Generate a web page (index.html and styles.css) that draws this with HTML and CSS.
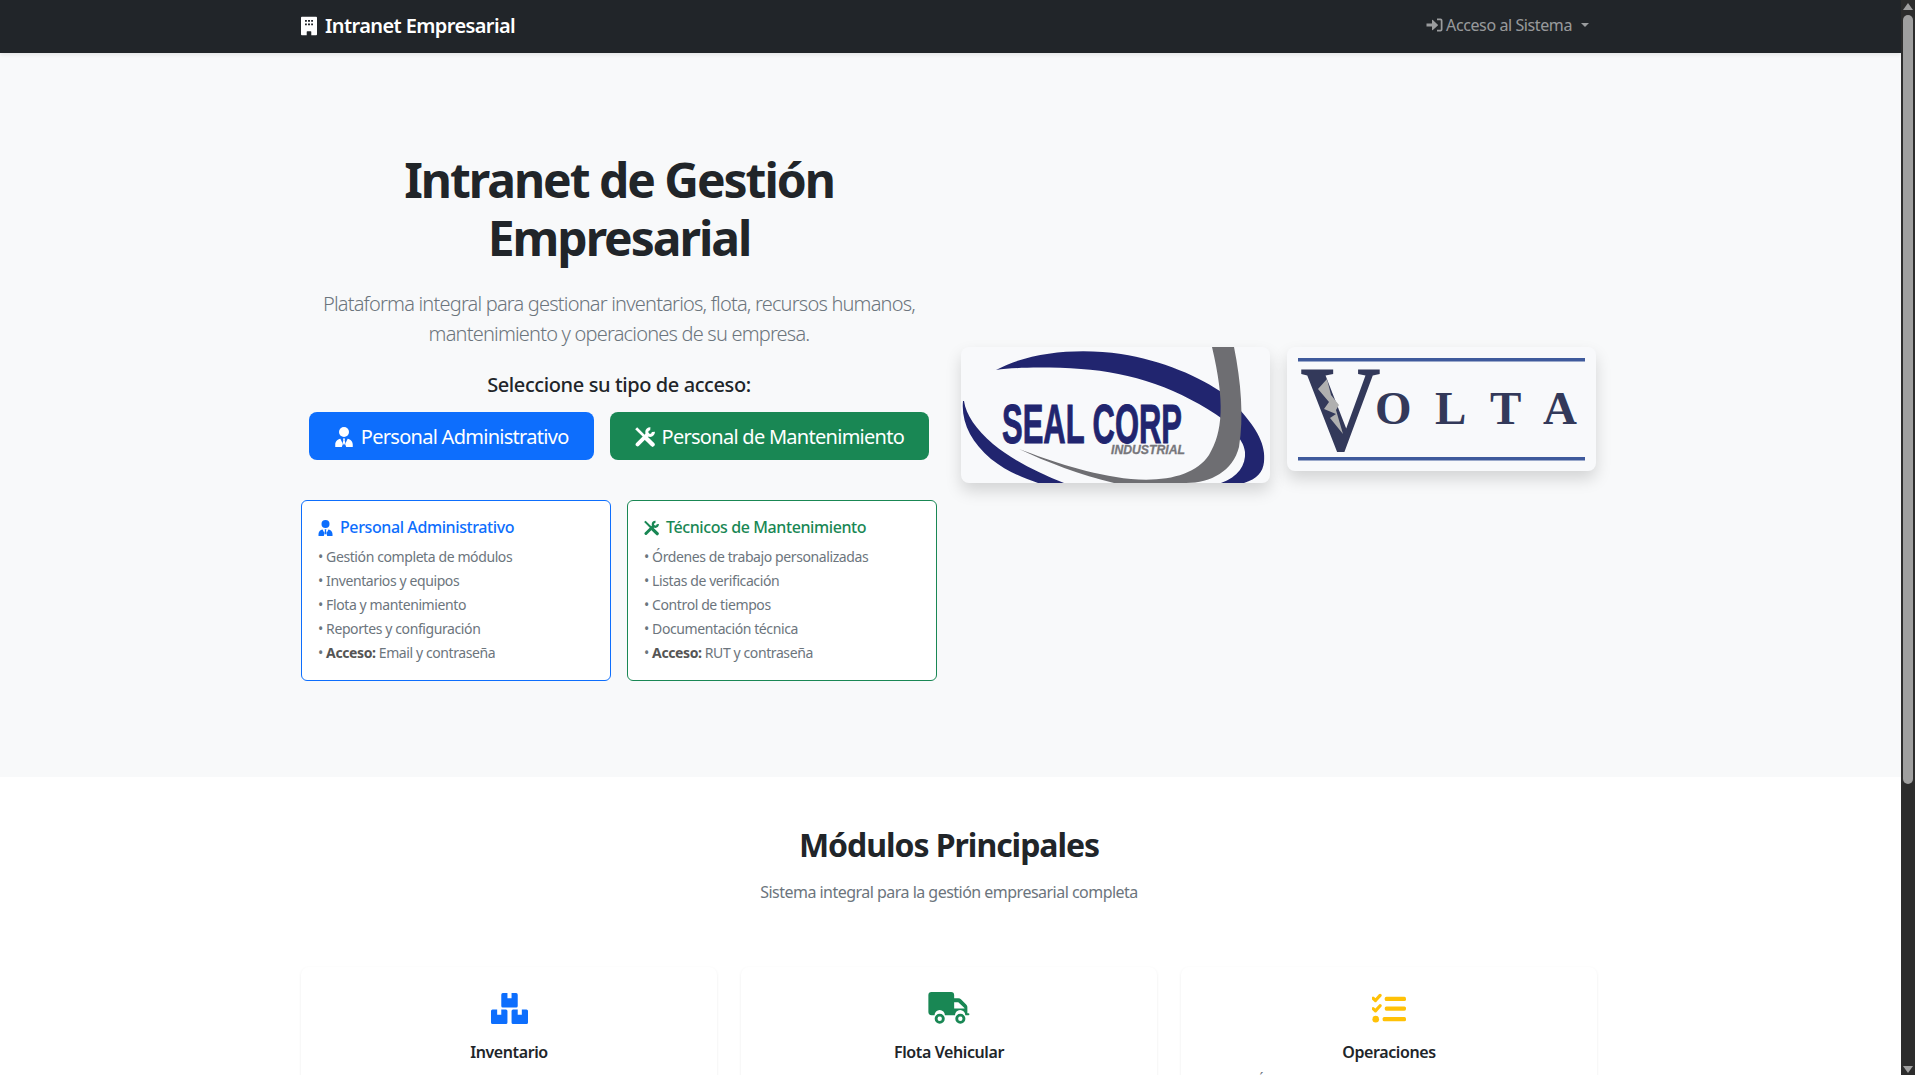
FILE: index.html
```html
<!DOCTYPE html>
<html lang="es">
<head>
	<meta charset="UTF-8">
	<meta name="viewport" content="width=device-width, initial-scale=1.0">
	<title>Intranet Empresarial</title>
	<link rel="stylesheet" href="styles.css">
</head>
<body>
	<svg class="iconDefs" aria-hidden="true">
		<symbol id="i-building" viewBox="0 0 448 512">
			<path fill-rule="evenodd" d="M24 0h400a24 24 0 0 1 24 24v464a24 24 0 0 1-24 24H288v-96a16 16 0 0 0-16-16h-96a16 16 0 0 0-16 16v96H24a24 24 0 0 1-24-24V24A24 24 0 0 1 24 0zM112 88v52h52V88zm84 0v52h56V88zm88 0v52h52V88zM112 184v52h52v-52zm84 0v52h56v-52zm88 0v52h52v-52z"/>
		</symbol>
		<symbol id="i-signin" viewBox="0 0 512 512">
			<path d="M0 208h176V104a16 16 0 0 1 27-11l160 152a16 16 0 0 1 0 23L203 419a16 16 0 0 1-27-11V304H0zM336 48h112a64 64 0 0 1 64 64v288a64 64 0 0 1-64 64H336v-56h104a16 16 0 0 0 16-16V120a16 16 0 0 0-16-16H336z"/>
		</symbol>
		<symbol id="i-user" viewBox="0 0 448 512">
			<circle cx="224" cy="128" r="128"/>
			<path d="M130 300l66 132-28 80H0v-64c0-74 56-136 130-148zM318 300c74 12 130 74 130 148v64H280l-28-80zM196 296h56l-12 44 16 60-32 70-32-70 16-60z"/>
		</symbol>
		<symbol id="i-tools" viewBox="0 0 512 512">
			<path class="iconLine iconLine-thin" d="M30 30l210 210"/>
			<path class="iconLine iconLine-thick" d="M300 300l150 150"/>
			<path class="iconLine iconLine-mid" d="M66 446l250-250"/>
			<path class="iconHead" d="M392 46a84 84 0 1 0 78 78"/>
		</symbol>
		<symbol id="i-boxes" viewBox="0 0 576 480">
			<path d="M184 0h72v80h64V0h72a24 24 0 0 1 24 24v176a24 24 0 0 1-24 24H184a24 24 0 0 1-24-24V24a24 24 0 0 1 24-24z"/>
			<path d="M24 256h72v80h64v-80h72a24 24 0 0 1 24 24v176a24 24 0 0 1-24 24H24a24 24 0 0 1-24-24V280a24 24 0 0 1 24-24z"/>
			<path d="M344 256h72v80h64v-80h72a24 24 0 0 1 24 24v176a24 24 0 0 1-24 24H344a24 24 0 0 1-24-24V280a24 24 0 0 1 24-24z"/>
		</symbol>
		<symbol id="i-truck" viewBox="0 0 640 512">
			<path fill-rule="evenodd" d="M48 0h304a48 48 0 0 1 48 48v48h64c17 0 33 7 45 19l77 77c12 12 19 28 19 45v91h16a16 16 0 0 1 0 32h-48a80 80 0 0 0-160 0H256a80 80 0 0 0-160 0H48a48 48 0 0 1-48-48V48A48 48 0 0 1 48 0zM400 160v96h160v-6l-96-90z"/>
			<circle class="iconWheel" cx="176" cy="416" r="56"/>
			<circle class="iconWheel" cx="496" cy="416" r="56"/>
		</symbol>
		<symbol id="i-tasks" viewBox="0 0 512 448">
			<path class="iconCheck" d="M16 70l36 34 70-78"/>
			<path class="iconCheck" d="M16 226l36 34 70-78"/>
			<circle cx="56" cy="384" r="50"/>
			<rect x="192" y="48" width="320" height="64" rx="24"/>
			<rect x="192" y="192" width="320" height="64" rx="24"/>
			<rect x="160" y="352" width="352" height="64" rx="24"/>
		</symbol>
	</svg>

	<div class="viewport">
		<div class="page">
			<nav class="navbar">
				<div class="container navbarInner">
					<a class="brand" href="#"><svg class="icon icon-brand"><use href="#i-building"/></svg>Intranet Empresarial</a>
					<a class="navLink" href="#"><svg class="icon icon-nav"><use href="#i-signin"/></svg>Acceso al Sistema<span class="caret"></span></a>
				</div>
			</nav>

			<section class="hero">
				<div class="container heroRow">
					<div class="heroText">
						<h1>Intranet de Gestión<br>Empresarial</h1>
						<p class="lead">Plataforma integral para gestionar inventarios, flota, recursos humanos, mantenimiento y operaciones de su empresa.</p>
						<h5>Seleccione su tipo de acceso:</h5>
						<div class="btnRow">
							<a class="btn btn-primary" href="#"><svg class="icon icon-btn"><use href="#i-user"/></svg>Personal Administrativo</a>
							<a class="btn btn-success" href="#"><svg class="icon icon-btn"><use href="#i-tools"/></svg>Personal de Mantenimiento</a>
						</div>
						<div class="accessCards">
							<div class="accessCard accessCard-primary">
								<h6><svg class="icon icon-card"><use href="#i-user"/></svg>Personal Administrativo</h6>
								<ul>
									<li>• Gestión completa de módulos</li>
									<li>• Inventarios y equipos</li>
									<li>• Flota y mantenimiento</li>
									<li>• Reportes y configuración</li>
									<li>• <strong>Acceso:</strong> Email y contraseña</li>
								</ul>
							</div>
							<div class="accessCard accessCard-success">
								<h6><svg class="icon icon-card"><use href="#i-tools"/></svg>Técnicos de Mantenimiento</h6>
								<ul>
									<li>• Órdenes de trabajo personalizadas</li>
									<li>• Listas de verificación</li>
									<li>• Control de tiempos</li>
									<li>• Documentación técnica</li>
									<li>• <strong>Acceso:</strong> RUT y contraseña</li>
								</ul>
							</div>
						</div>
					</div>

					<div class="heroLogos">
						<div class="logoCard">
							<svg class="logo logo-seal" viewBox="0 0 309 136" role="img" aria-label="Seal Corp Industrial">
								<path class="sealNavy" d="M35 23C70 4 120 1 160 7C200 13 240 30 263 47V73C220 42 170 25 120 22C90 20 55 20 35 23z"/>
								<path class="sealNavy" d="M279 63C296 82 305 98 303 115C302 125 296 132 283 136H260C277 130 285 118 284 105C283 97 279 92 275 87z"/>
								<path class="sealNavy" d="M2 54C0 75 10 95 30 112C45 124 62 131 77 136H103C75 125 50 112 32 97C15 82 5 68 3 54z"/>
								<path class="sealGrey" d="M251 0H273C280 35 283 70 278 100C272 124 250 136 225 136H153C120 128 85 115 58 102C90 114 130 128 170 132C205 135 235 128 248 108C262 85 264 55 251 0z"/>
								<text class="sealName" x="41" y="96" textLength="180" lengthAdjust="spacingAndGlyphs">SEAL CORP</text>
								<text class="sealSub" x="150" y="107" textLength="74" lengthAdjust="spacingAndGlyphs">INDUSTRIAL</text>
							</svg>
						</div>
						<div class="logoCard">
							<svg class="logo logo-volta" viewBox="0 0 309 124" role="img" aria-label="Volta">
								<rect class="voltaRule" x="11" y="11" width="287" height="3.5"/>
								<rect class="voltaRule" x="11" y="110" width="287" height="3.5"/>
								<text class="voltaV" x="13" y="103" textLength="81" lengthAdjust="spacingAndGlyphs">V</text>
								<polygon class="voltaBolt" points="40,32 31,42 42,55 37,62 49,67 43,71 56,87 49,63 52,58 44,48"/>
								<text class="voltaRest" x="88 148 203 256" y="77">OLTA</text>
							</svg>
						</div>
					</div>
				</div>
			</section>

			<section class="modules">
				<div class="container">
					<h2>Módulos Principales</h2>
					<p class="modulesSub">Sistema integral para la gestión empresarial completa</p>
					<div class="moduleGrid">
						<div class="moduleCard">
							<svg class="icon icon-module icon-boxes text-primary"><use href="#i-boxes"/></svg>
							<h5>Inventario</h5>
							<p>Control de equipos y herramientas</p>
						</div>
						<div class="moduleCard">
							<svg class="icon icon-module text-success"><use href="#i-truck"/></svg>
							<h5>Flota Vehicular</h5>
							<p>Control de vehículos y conductores</p>
						</div>
						<div class="moduleCard">
							<svg class="icon icon-module icon-tasks text-warning"><use href="#i-tasks"/></svg>
							<h5>Operaciones</h5>
							<p>Órdenes de trabajo y listas de verificación</p>
						</div>
					</div>
				</div>
			</section>
		</div>

		<div class="scrollbar" aria-hidden="true">
			<span class="scrollArrow scrollArrow-up"></span>
			<span class="scrollThumb"></span>
			<span class="scrollArrow scrollArrow-down"></span>
		</div>
	</div>
</body>
</html>
```

FILE: styles.css
```css
* {box-sizing:border-box;}
html, body {margin:0; height:100%; overflow:hidden;}
body {font-family:"Noto Sans", "Open Sans", "Liberation Sans", sans-serif; font-size:16px; line-height:1.5; color:#212529; background-color:#fff; letter-spacing:-0.025em;}
a {text-decoration:none;}
h1, h2, h5, h6, p, ul {margin:0; padding:0;}
ul {list-style:none;}
.iconDefs {display:none;}

/* page + fake scrollbar */
.viewport {display:flex; height:100vh;}
.page {flex:1; min-width:0; overflow:hidden;}
.container {width:1320px; margin:0 292px 0 289px; padding:0 12px;}
.scrollbar {width:14px; flex:none; background-color:#2c2c2c; display:flex; flex-direction:column; align-items:center;}
.scrollThumb {width:10px; height:769px; margin-top:5px; border-radius:5px; background-color:#9f9f9f;}
.scrollArrow {width:0; height:0; border-left:5px solid transparent; border-right:5px solid transparent;}
.scrollArrow-up {margin-top:3px; border-bottom:7px solid #9f9f9f;}
.scrollArrow-down {margin-top:auto; margin-bottom:2px; border-top:7px solid #9f9f9f;}

/* icons */
.icon {display:inline-block; fill:currentColor; flex:none;}
.icon-brand {width:16px; height:20px; margin-right:8px;}
.icon-nav {width:17px; height:16px; margin-right:3px;}
.icon-btn {width:20px; height:20px; margin-right:7px;}
.icon-card {width:15px; height:16px; margin-right:7px;}
.icon-module {width:44px; height:33px; margin-bottom:12px;}
.icon-boxes {width:37px;}
.icon-tasks {width:34px;}
.iconLine {fill:none; stroke:currentColor;}
.iconLine-thin {stroke-width:70px;}
.iconLine-thick {stroke-width:112px; stroke-linecap:round;}
.iconLine-mid {stroke-width:100px; stroke-linecap:round;}
.iconHead {fill:none; stroke:currentColor; stroke-width:80px;}
.iconWheel {fill:none; stroke:currentColor; stroke-width:44px;}
.iconCheck {fill:none; stroke:currentColor; stroke-width:48px; stroke-linecap:round; stroke-linejoin:round;}
.text-primary {color:#0d6efd;}
.text-success {color:#198754;}
.text-warning {color:#ffc107;}

/* navbar */
.navbar {height:53px; background-color:#212529; box-shadow:0 2px 4px rgba(0,0,0,.08); position:relative;}
.navbarInner {display:flex; justify-content:space-between; align-items:center; height:53px; padding-bottom:2px;}
.brand {display:flex; align-items:center; color:#fff; font-size:20px; font-weight:600; letter-spacing:-0.03em;}
.navLink {display:flex; align-items:center; color:rgba(255,255,255,.55); padding-right:8px; margin-bottom:2px;}
.caret {width:0; height:0; margin-left:9px; border-top:4.8px solid currentColor; border-left:4.8px solid transparent; border-right:4.8px solid transparent;}

/* hero */
.hero {background-color:#f8f9fa; padding:96px 0;}
.heroRow {display:grid; grid-template-columns:636px 636px; column-gap:24px; align-items:center;}
.heroText {text-align:center;}
.hero h1 {font-size:48px; font-weight:700; line-height:1.2; margin:2px 0 23px; letter-spacing:-0.0425em;}
.lead {font-size:20px; font-weight:300; color:#6c757d; margin-bottom:24px; letter-spacing:-0.04em;}
.hero h5 {font-size:20px; font-weight:500; line-height:1.2; margin-bottom:15px;}
.btnRow {display:flex; justify-content:center; gap:16px; margin-bottom:40px;}
.btn {display:flex; align-items:center; height:48px; padding:1px 25px 0; border-radius:8px; color:#fff; font-size:20px; letter-spacing:-0.036em;}
.btn-primary {background-color:#0d6efd;}
.btn-success {background-color:#198754;}
.accessCards {display:grid; grid-template-columns:1fr 1fr; gap:16px; text-align:left;}
.accessCard {height:181px; padding:17px 16px 16px; border:1.5px solid; border-radius:6px; background-color:#fff;}
.accessCard-primary {border-color:#0d6efd;}
.accessCard-success {border-color:#198754;}
.accessCard h6 {display:flex; align-items:center; font-size:16px; font-weight:500; line-height:1.2; margin-bottom:8px;}
.accessCard-primary h6 {color:#0d6efd;}
.accessCard-success h6 {color:#198754;}
.accessCard li {font-size:14px; line-height:24px; color:#6c757d;}
.accessCard strong {font-weight:700; color:#555;}

/* logos */
.heroLogos {display:grid; grid-template-columns:309px 309px; align-items:start; gap:17px;}
.logoCard {border-radius:8px; overflow:hidden; background-color:#f8f9fb; box-shadow:0 8px 16px rgba(0,0,0,.15);}
.logo {display:block; width:100%;}
.sealNavy {fill:#21256f;}
.sealGrey {fill:#6e6e72;}
.sealName {font-family:"Liberation Sans", sans-serif; font-size:56px; font-weight:700; fill:#21256f; stroke:#21256f; stroke-width:1px; letter-spacing:0;}
.sealSub {font-family:"Liberation Sans", sans-serif; font-size:12.5px; font-weight:700; font-style:italic; fill:#77777b; stroke:#77777b; stroke-width:.3px; letter-spacing:0;}
.voltaRule {fill:#3f5a9c;}
.voltaV {font-family:"Liberation Serif", serif; font-size:122px; font-weight:700; fill:#33395a; letter-spacing:0;}
.voltaBolt {fill:#b0b0b0;}
.voltaRest {font-family:"Liberation Serif", serif; font-size:47px; font-weight:700; fill:#33395a; letter-spacing:0;}

/* modules */
.modules {padding-top:49px;}
.modules h2 {font-size:32px; font-weight:700; line-height:1.2; text-align:center; margin-bottom:15px; letter-spacing:-0.0325em;}
.modulesSub {text-align:center; color:#6c757d; margin-bottom:63px; letter-spacing:-0.0325em;}
.moduleGrid {display:grid; grid-template-columns:repeat(3, 416px); gap:24px;}
.moduleCard {padding:25px 16px 24px; border-radius:8px; text-align:center; box-shadow:0 1px 3px rgba(0,0,0,.08);}
.moduleCard h5 {font-size:16px; font-weight:600; line-height:1.2; margin-bottom:8px;}
.moduleCard p {font-size:14px; color:#6c757d; letter-spacing:-0.01em;}
```
